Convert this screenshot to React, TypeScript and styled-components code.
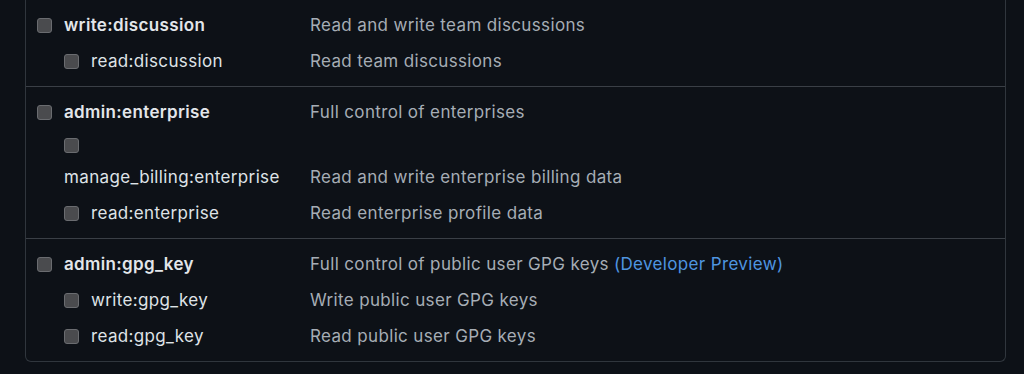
import React from "react";
import styled, { createGlobalStyle } from "styled-components";

const Global = createGlobalStyle`
  html, body { margin: 0; padding: 0; background: #0d1117; }
  body { font-family: Inter, "Noto Sans", "Liberation Sans", sans-serif; }
`;

const Page = styled.div`
  width: 1024px;
  height: 374px;
  background: #0d1117;
  padding: 0 18px 0 25px;
  box-sizing: border-box;
  overflow: hidden;
`;

const Panel = styled.div`
  border: 1px solid #30363d;
  border-top: none;
  border-radius: 0 0 6px 6px;
  width: 981px;
  box-sizing: border-box;
`;

const Group = styled.div`
  padding: 7px 0;
  & + & { border-top: 1px solid #3a3f46; }
`;

const Row = styled.div`
  display: grid;
  grid-template-columns: 284px 1fr;
  min-height: 36px;
  align-items: center;
`;

const LabelCell = styled.label<{ $nested?: boolean; $wrap?: boolean }>`
  display: flex;
  flex-direction: ${(p) => (p.$wrap ? "column" : "row")};
  align-items: ${(p) => (p.$wrap ? "flex-start" : "center")};
  gap: ${(p) => (p.$wrap ? "13px" : "12px")};
  padding: ${(p) => (p.$wrap ? "8px 0 7px" : "0")};
  padding-left: ${(p) => (p.$nested ? 38 : 11)}px;
`;

const Box = styled.input.attrs({ type: "checkbox" })`
  appearance: none;
  -webkit-appearance: none;
  margin: 0;
  width: 15px;
  height: 15px;
  flex: none;
  border-radius: 3px;
  background: #4a4b4e;
  border: 1px solid #6a6c70;
  box-sizing: border-box;
`;

const Name = styled.span<{ $bold?: boolean }>`
  font-size: 17px;
  line-height: 22px;
  font-weight: ${(p) => (p.$bold ? 600 : 400)};
  color: ${(p) => (p.$bold ? "#e3e6ea" : "#dfe3e7")};
  letter-spacing: 0.35px;
  white-space: nowrap;
`;

const Desc = styled.span<{ $wrap?: boolean }>`
  font-size: 17px;
  line-height: 22px;
  color: #a6adb5;
  align-self: ${(p) => (p.$wrap ? "end" : "center")};
  padding-bottom: ${(p) => (p.$wrap ? "7px" : "0")};
  letter-spacing: 0.35px;
`;

const Preview = styled.span`
  color: #4f95e0;
  margin-left: 5px;
`;

type Scope = {
  name: string;
  desc: string;
  nested?: boolean;
  wrap?: boolean;
  preview?: boolean;
};

const groups: Scope[][] = [
  [
    { name: "write:discussion", desc: "Read and write team discussions" },
    { name: "read:discussion", desc: "Read team discussions", nested: true },
  ],
  [
    { name: "admin:enterprise", desc: "Full control of enterprises" },
    {
      name: "manage_billing:enterprise",
      desc: "Read and write enterprise billing data",
      nested: true,
      wrap: true,
    },
    { name: "read:enterprise", desc: "Read enterprise profile data", nested: true },
  ],
  [
    { name: "admin:gpg_key", desc: "Full control of public user GPG keys", preview: true },
    { name: "write:gpg_key", desc: "Write public user GPG keys", nested: true },
    { name: "read:gpg_key", desc: "Read public user GPG keys", nested: true },
  ],
];

export default function App() {
  return (
    <Page>
      <Global />
      <Panel>
        {groups.map((g, i) => (
          <Group key={i}>
            {g.map((s) => (
              <Row key={s.name}>
                <LabelCell $nested={s.nested} $wrap={s.wrap}>
                  <Box />
                  <Name $bold={!s.nested}>{s.name}</Name>
                </LabelCell>
                <Desc $wrap={s.wrap}>
                  {s.desc}
                  {s.preview && <Preview>(Developer Preview)</Preview>}
                </Desc>
              </Row>
            ))}
          </Group>
        ))}
      </Panel>
    </Page>
  );
}
